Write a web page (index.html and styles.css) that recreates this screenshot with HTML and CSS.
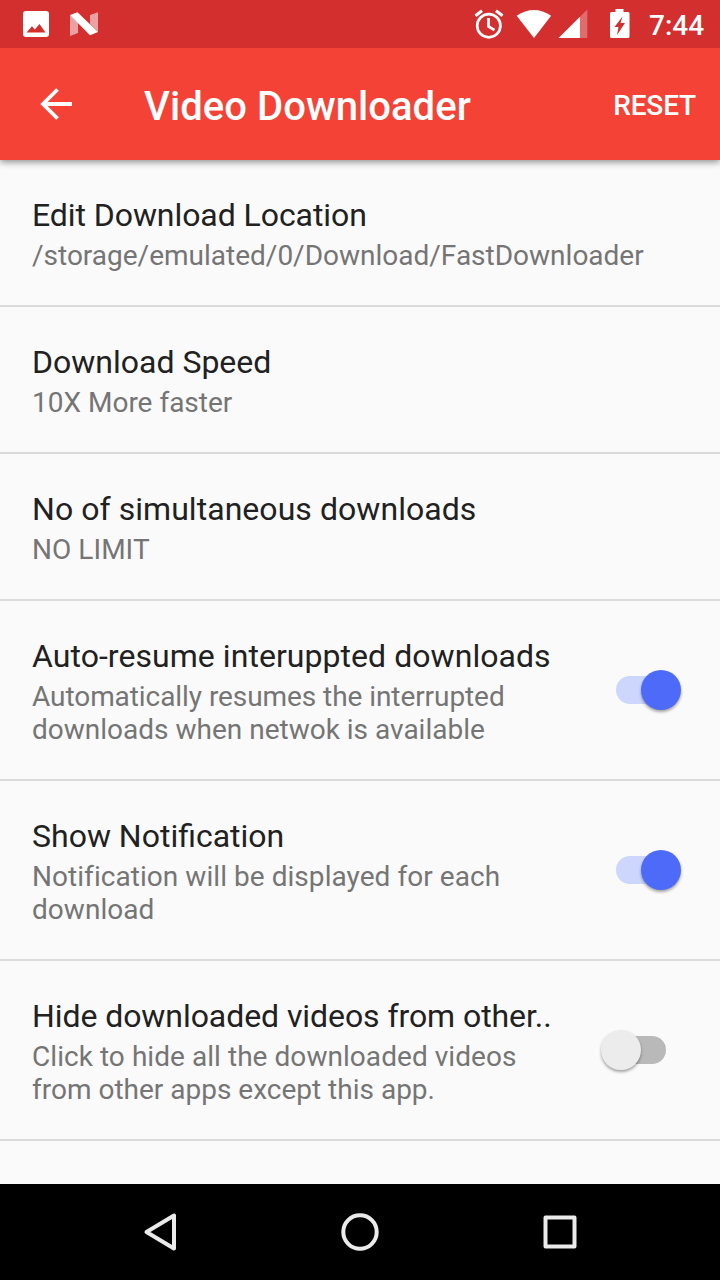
FILE: index.html
```html
<!DOCTYPE html>
<html lang="en">
<head>
<meta charset="utf-8">
<title>Video Downloader</title>
<link rel="stylesheet" href="styles.css">
</head>
<body>
<div class="screen">
  <header class="status">
    <svg class="status-left" width="120" height="48" viewBox="0 0 120 48">
      <path fill="#fff" fill-rule="evenodd" d="M26 11h20a3 3 0 0 1 3 3v20a3 3 0 0 1-3 3H26a3 3 0 0 1-3-3V14a3 3 0 0 1 3-3zM26.500 32.500h19L39.500 24l-4.700 5.500-2.800-3.300z"/>
      <path fill="#fff" fill-opacity=".55" d="M70 15l8 7v11l-8 3zM90 15l8-2.700V32l-8-8z"/>
      <path fill="#fff" d="M70 15l7.500-2.700L98 32l-8 3.300z"/>
    </svg>
    <svg class="status-icons" width="170" height="48" viewBox="470 0 170 48">
      <g fill="none" stroke="#fff" stroke-width="2.700"><circle cx="488.800" cy="25.700" r="11.600"/><path d="M488.500 18v8.500l6 3.700"/><path stroke-width="3" d="M475.500 15.700l6.500-5M502.500 15.700l-6.500-5"/></g>
      <path fill="#fff" d="M516.700 15.700q17.200-11.400 34.400 0L534 38z"/>
      <path fill="#fff" fill-opacity=".3" d="M587.300 9.500V38H580V16.700z"/><path fill="#fff" d="M580 16.700V38h-21.500z"/>
      <path fill="#fff" fill-rule="evenodd" d="M615.500 9h8v3h4.500q1.500 0 1.500 1.500v23q0 1.500-1.500 1.500h-16.500q-1.500 0-1.500-1.500v-23q0-1.500 1.500-1.500h4zM622.500 16.500l-8 10.500h4l-1.500 8 8-12h-4.500z"/>
    </svg>
    <span class="clock">7:44</span>
  </header>
  <nav class="toolbar">
    <svg class="back" width="32" height="32" viewBox="0 0 32 32" fill="none" stroke="#fff" stroke-width="3.800"><path d="M17.500 1.500L3 16l14.500 14.500M3 16h29"/></svg>
    <h1 class="title">Video Downloader</h1>
    <span class="reset">RESET</span>
  </nav>
  <main class="list">
    <section class="row"><div class="text"><h2 class="tight">Edit Download Location</h2><p>/storage/emulated/0/Download/FastDownloader</p></div></section>
    <section class="row"><div class="text"><h2>Download Speed</h2><p>10X More faster</p></div></section>
    <section class="row"><div class="text"><h2 class="loose">No of simultaneous downloads</h2><p class="loose">NO LIMIT</p></div></section>
    <section class="row"><div class="text"><h2 class="loose">Auto-resume interuppted downloads</h2><p><span class="tight">Automatically resumes the interrupted</span><br>downloads when netwok is available</p></div><div class="switch on"><i class="thumb"></i></div></section>
    <section class="row"><div class="text"><h2>Show Notification</h2><p class="loose">Notification will be displayed for each<br>download</p></div><div class="switch on"><i class="thumb"></i></div></section>
    <section class="row"><div class="text"><h2 class="tight">Hide downloaded videos from other..</h2><p><span class="loose">Click to hide all the downloaded videos</span><br>from other apps except this app.</p></div><div class="switch"><i class="thumb"></i></div></section>
  </main>
  <footer class="navbar">
    <svg width="720" height="96" viewBox="0 0 720 96" fill="none" stroke="#ebebeb" stroke-width="4" stroke-linejoin="round"><path d="M174 31.500v33L146.500 48z"/><circle cx="360" cy="48" r="16.700"/><path d="M545.500 33.500h29v29h-29z"/></svg>
  </footer>
</div>
</body>
</html>
```
FILE: styles.css
```css
body { margin: 0; font-family: Roboto, sans-serif; background: #fafafa; }
h1, h2, p { margin: 0; font-weight: 400; white-space: nowrap; }
svg { display: block; flex: none; }
.screen { width: 720px; height: 1280px; display: flex; flex-direction: column; overflow: hidden; }
.status { height: 48px; flex: none; display: flex; align-items: center; background: #d32f2f; color: #fff; position: relative; z-index: 2; }
.status-icons { margin-left: 350px; }
.clock { margin-left: 9px; padding-top: 3px; font-size: 28px; font-weight: 500; line-height: 50px; }
.toolbar { height: 112px; flex: none; box-sizing: border-box; padding: 0 24px 0 40px; display: flex; align-items: center; background: #f44336; color: #fff; box-shadow: 0 2px 7px rgba(0,0,0,.45); position: relative; z-index: 1; }
.title { margin-left: 72px; padding-top: 4px; font-size: 40px; font-weight: 500; letter-spacing: .06px; }
.reset { margin-left: auto; padding-top: 2px; font-size: 28px; font-weight: 500; letter-spacing: -.15px; }
.list { flex: 1; }
.row { display: flex; justify-content: space-between; box-sizing: border-box; border-bottom: 2px solid #dadada; padding: 36px 39px 33px 32px; }
.text h2 { font-size: 32px; line-height: 38px; color: #212121; }
.text p { margin-top: 5px; font-size: 28px; line-height: 33px; color: #757575; }
.tight { letter-spacing: -.07px; }
.loose { letter-spacing: .05px; }
.switch { width: 50px; height: 28px; margin: 39px 15px 0 0; border-radius: 14px; background: #b9b9b9; position: relative; flex: none; }
.thumb { position: absolute; top: -6px; left: -15px; width: 40px; height: 40px; border-radius: 50%; background: #ececec; box-shadow: 0 2px 3px rgba(0,0,0,.35); }
.switch.on { background: #cdd6fc; }
.on .thumb { left: 25px; background: #4d6bf8; }
.navbar { height: 96px; flex: none; background: #000; }
```
